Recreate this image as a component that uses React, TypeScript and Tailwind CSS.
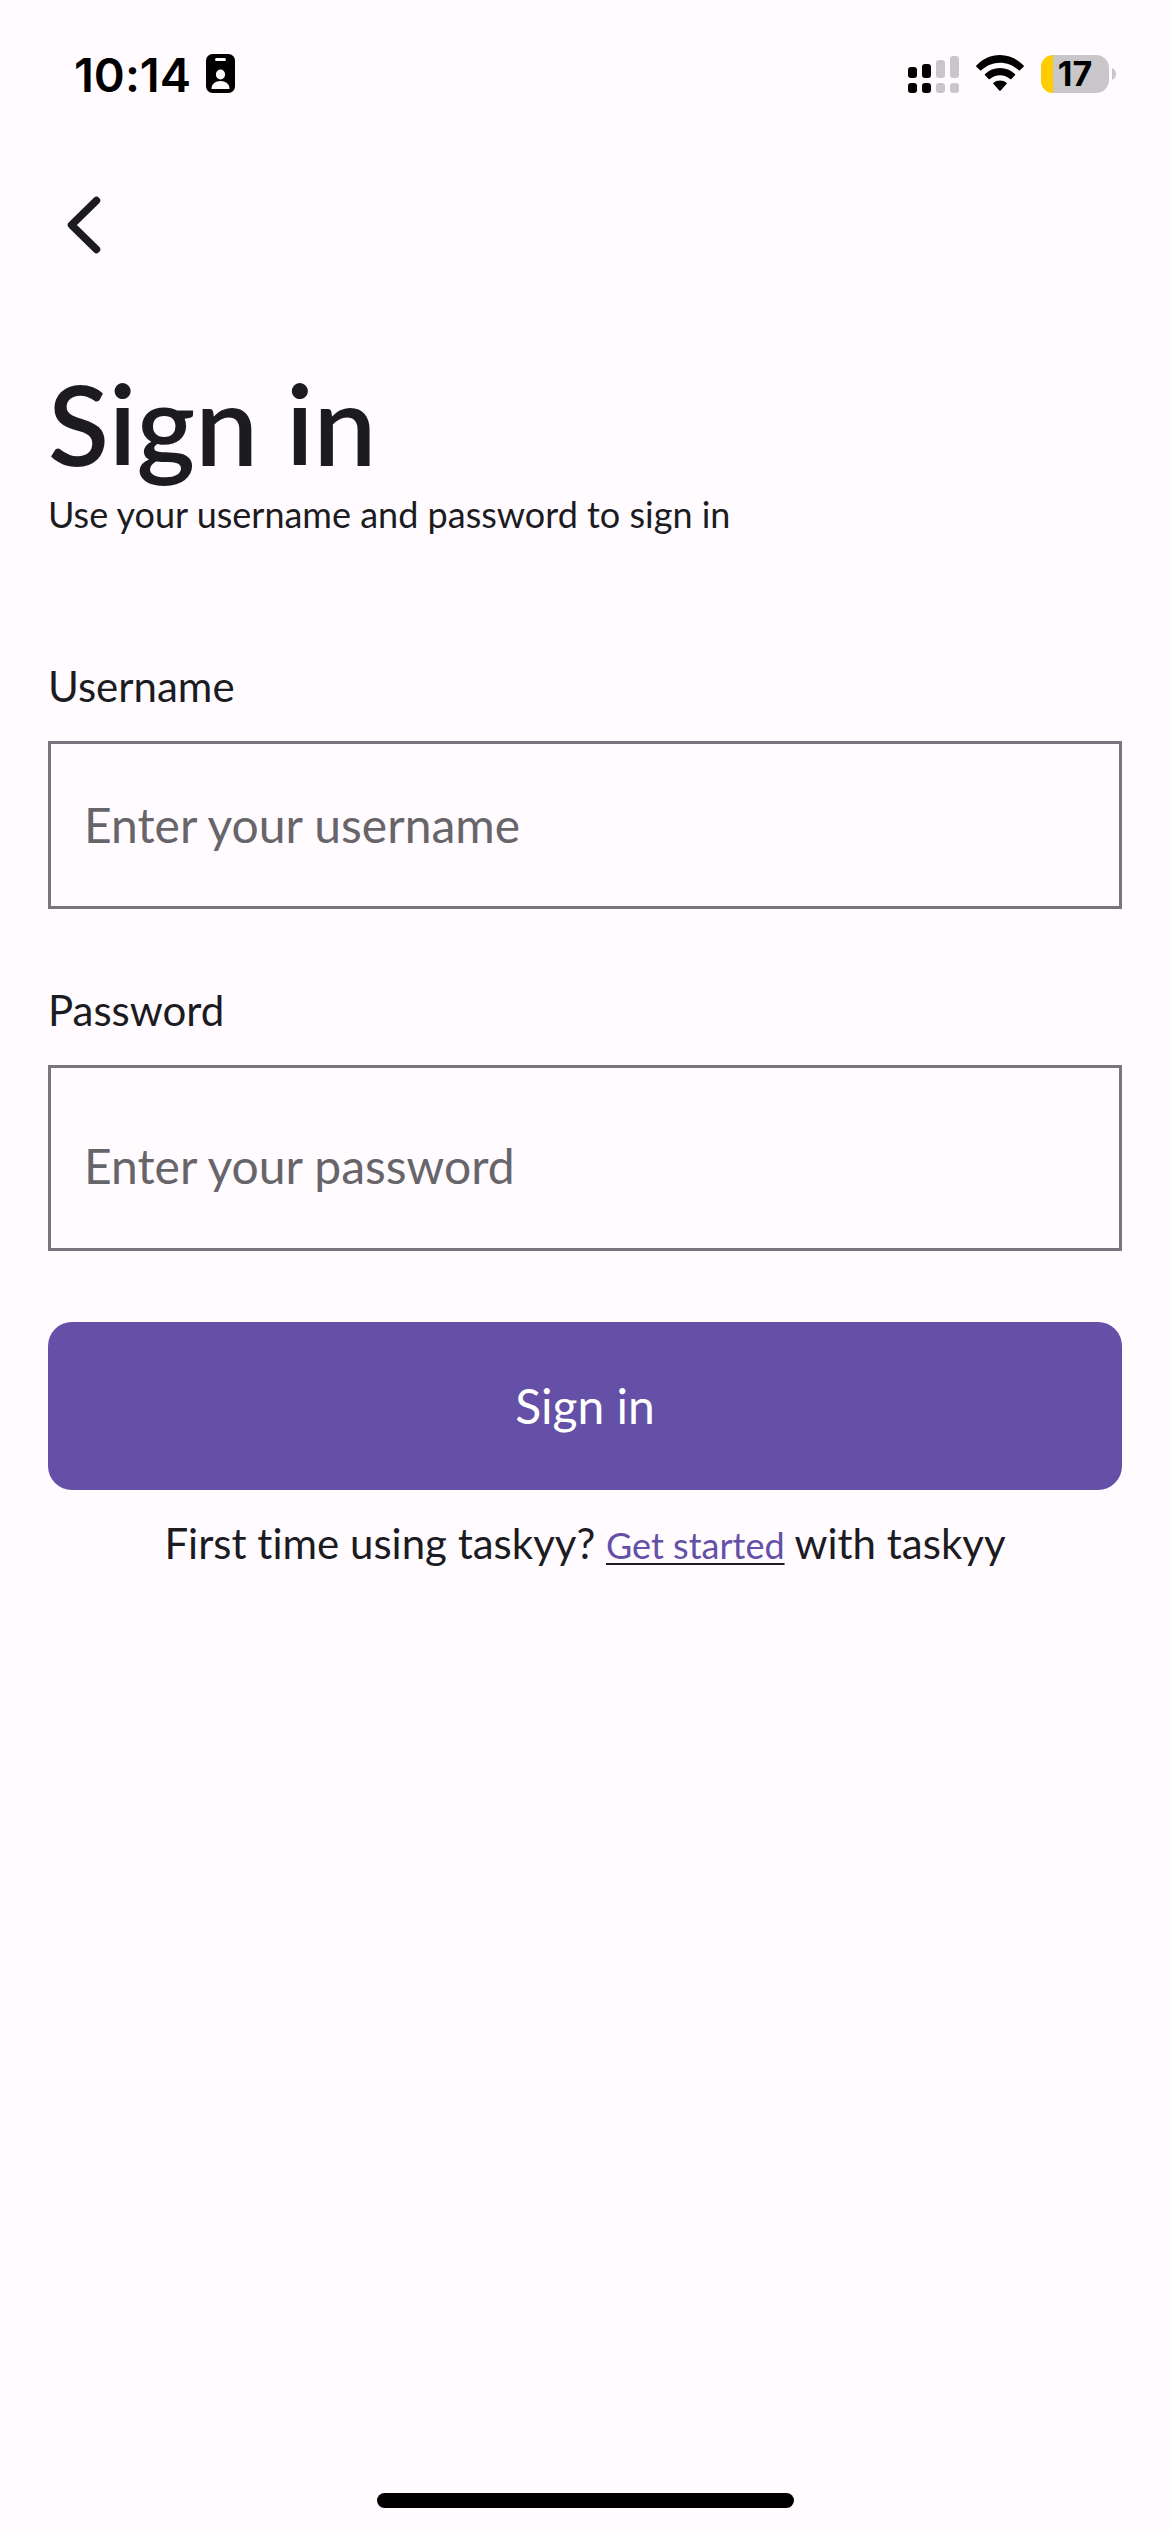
import { useState } from "react";

function BadgeIcon() {
  return (
    <svg width="30" height="40" viewBox="0 0 30 40" aria-hidden="true">
      <rect x="0" y="0" width="29" height="39" rx="6.5" fill="#000" />
      <rect x="9" y="4" width="11" height="3" rx="1.5" fill="#fffbff" />
      <ellipse cx="14.5" cy="20.5" rx="4.6" ry="5" fill="#fffbff" />
      <path d="M5.5 34.5C5.5 30 9.5 27 14.5 27s9 3 9 7.500q0 .5-.8.5H6.300q-.8 0-.8-.5Z" fill="#fffbff" />
    </svg>
  );
}

function SignalIcon() {
  return (
    <svg width="51" height="38" viewBox="0 0 51 38" aria-hidden="true">
      <g fill="#000">
        <rect x="0" y="12" width="9" height="11" rx="3" />
        <rect x="14" y="9" width="9" height="14" rx="3" />
        <rect x="0" y="28" width="9" height="10" rx="3" />
        <rect x="14" y="28" width="9" height="10" rx="3" />
      </g>
      <g fill="#c9c6ca">
        <rect x="28" y="5" width="9" height="18" rx="3" />
        <rect x="42" y="1" width="9" height="22" rx="3" />
        <rect x="28" y="28" width="9" height="10" rx="3" />
        <rect x="42" y="28" width="9" height="10" rx="3" />
      </g>
    </svg>
  );
}

function WifiIcon() {
  return (
    <svg width="48" height="38" viewBox="0 0 48 38" aria-hidden="true">
      <path d="M0.400 10.500C6.500 4 15 0 24 0s17.500 4 23.600 10.500q.6.7 0 1.300L44 15.300q-.7.6-1.300 0C37.700 10.500 31 7.700 24 7.700S10.300 10.500 5.300 15.300q-.6.6-1.300 0L.4 11.800q-.6-.6 0-1.300Z" />
      <path d="M9 19C13 15.200 18.300 13 24 13s11 2.200 15 6q.6.700 0 1.300l-3.600 3.600q-.6.600-1.300 0C31.400 21.600 27.900 20.200 24 20.200s-7.400 1.400-10.100 3.700q-.7.600-1.300 0L9 20.300q-.6-.6 0-1.300Z" />
      <path d="M17.500 27.700c1.800-1.500 4-2.300 6.500-2.300s4.700.8 6.500 2.300q.7.700 0 1.400l-5.800 6.500q-.7.700-1.400 0l-5.800-6.500q-.7-.7 0-1.400Z" />
    </svg>
  );
}

function Battery({ level }: { level: number }) {
  return (
    <div className="flex items-center gap-[3px]" aria-label={`Battery ${level}%`}>
      <div className="relative flex h-[38px] w-[68px] items-center justify-center rounded-[13px] bg-[#c9c6ca]">
        <div className="absolute inset-y-0 left-0 rounded-l-[13px] bg-[#ffcc00]" style={{ width: `${level}%` }} />
        <span className="relative font-['Inter',sans-serif] text-[34px] leading-[38px] font-bold text-black">
          {level}
        </span>
      </div>
      <svg width="4" height="12" viewBox="0 0 4 12" aria-hidden="true">
        <path d="M0 0C2.500 1 4 3 4 6s-1.500 5-4 6Z" fill="#c9c6ca" />
      </svg>
    </div>
  );
}

function StatusBar() {
  return (
    <header className="flex h-[148px] items-center justify-between pr-[54px] pl-[74px]">
      <div className="flex items-center gap-[15px]">
        <span className="font-['Inter',sans-serif] text-[47px] leading-none font-semibold text-black">10:14</span>
        <BadgeIcon />
      </div>
      <div className="flex items-center gap-[17px]">
        <SignalIcon />
        <WifiIcon />
        <Battery level={17} />
      </div>
    </header>
  );
}

const inputClass =
  "w-full appearance-none rounded-none border-[3px] border-[#79747e] bg-transparent px-[33px] text-[48px] leading-[58px] text-[#1c1b1f] outline-none placeholder:text-[#676569] placeholder:opacity-100";

export default function App() {
  const [username, setUsername] = useState("");
  const [password, setPassword] = useState("");

  return (
    <div className="flex min-h-screen flex-col bg-[#fffbff] font-['Lato',sans-serif] text-[#1c1b1f] [font-variant-ligatures:none]">
      <StatusBar />
      <nav className="flex h-[153px] items-center px-[48px]">
        <button type="button" aria-label="Back" className="flex size-[72px] items-center justify-center">
          <svg width="34" height="58" viewBox="0 0 34 58" fill="none" aria-hidden="true">
            <path d="M29.500 4.500 4.500 29l25 24.500" stroke="#1c1b1f" strokeWidth="7.500" strokeLinecap="round" strokeLinejoin="round" />
          </svg>
        </button>
      </nav>
      <main className="flex flex-1 flex-col px-[48px] pt-[55px]">
        <h1 className="text-[112px] leading-[134px] font-semibold">Sign in</h1>
        <p className="text-[36px] leading-[48px]">Use your username and password to sign in</p>
        <form className="flex flex-col pt-[118px]" onSubmit={(e) => e.preventDefault()}>
          <label htmlFor="username" className="text-[42px] leading-[60px]">
            Username
          </label>
          <input
            id="username"
            type="text"
            placeholder="Enter your username"
            value={username}
            onChange={(e) => setUsername(e.target.value)}
            className={`${inputClass} mt-[25px] py-[52px]`}
          />
          <label htmlFor="password" className="mt-[71px] text-[42px] leading-[60px]">
            Password
          </label>
          <input
            id="password"
            type="password"
            placeholder="Enter your password"
            value={password}
            onChange={(e) => setPassword(e.target.value)}
            className={`${inputClass} mt-[25px] pt-[69px] pb-[53px]`}
          />
          <button type="submit" className="mt-[71px] h-[168px] rounded-[24px] bg-[#6450a7] text-[48px] text-white">
            Sign in
          </button>
        </form>
        <p className="mt-[23px] text-center text-[42px] leading-[60px]">
          First time using taskyy?{" "}
          <a
            href="#get-started"
            className="text-[36px] text-[#6450a7] underline decoration-[#1c1b1f] decoration-[2px] underline-offset-[4px]"
          >
            Get started
          </a>{" "}
          with taskyy
        </p>
      </main>
      <footer className="flex justify-center pb-[24px]">
        <div className="h-[15px] w-[417px] rounded-full bg-black" />
      </footer>
    </div>
  );
}
